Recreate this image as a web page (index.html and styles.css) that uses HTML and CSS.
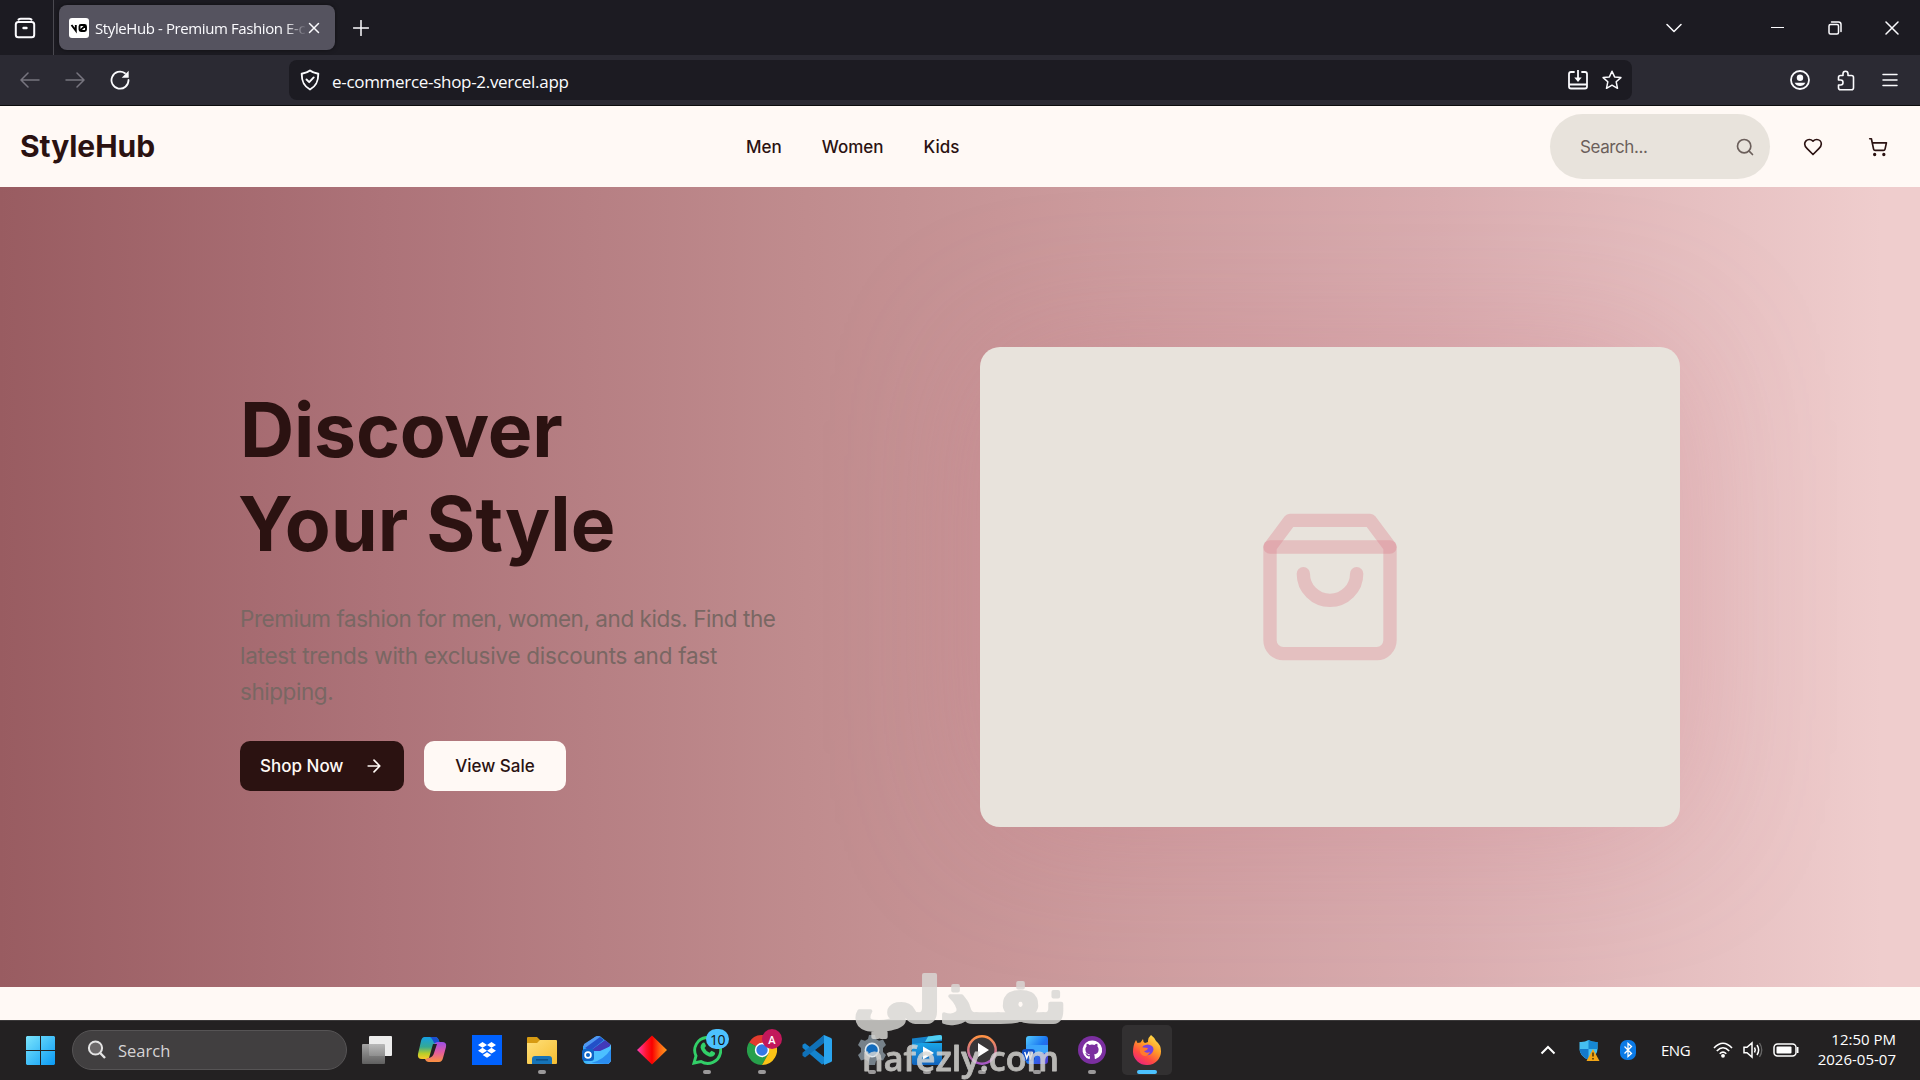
FILE: index.html
```html
<!DOCTYPE html>
<html lang="en">
<head>
    <meta charset="utf-8">
    <title>StyleHub - Premium Fashion E-commerce</title>
    <link rel="stylesheet" href="styles.css">
</head>
<body>
    <!-- Browser tabs -->
    <div class="tabbar">
        <div class="tab-manager">
            <svg width="22" height="22" viewBox="0 0 22 22" class="line thick"><path d="M4.500 2.600q1-.8 2.200-.8h8.600q1.200 0 2.200.8" /><rect x="1.800" y="5" width="18.400" height="15.200" rx="2.500"/><path d="M9.500 11h3" stroke-width="2.400"/></svg>
        </div>
        <div class="tab">
            <span class="favicon"><svg width="20" height="20" viewBox="0 0 20 20"><path d="M2.500 7l4.300 5.600V7M10.500 8.500q0-1.500 1.500-1.500h3.500q1.500 0 1.500 1.500v3q0 1.500-1.500 1.500H12q-1.500 0-1.500-1.500zM11 12.600L16.500 7.400" fill="none" stroke="#000" stroke-width="1.900"/></svg></span>
            <span class="tab-title">StyleHub - Premium Fashion E-c</span>
            <svg class="line tab-close" width="12" height="12" viewBox="0 0 12 12"><path d="M1.500 1.500l9 9M10.500 1.500l-9 9"/></svg>
        </div>
        <svg class="line new-tab" width="16" height="16" viewBox="0 0 16 16"><path d="M8 .5v15M.5 8h15"/></svg>
        <div class="window-controls">
            <svg class="line" width="16" height="10" viewBox="0 0 16 10"><path d="M1 1.500l7 7 7-7"/></svg>
            <svg class="line" width="13" height="14" viewBox="0 0 13 14"><path d="M0 6.500h13" stroke-width="1.200"/></svg>
            <svg class="line" width="14" height="14" viewBox="0 0 14 14"><rect x="1" y="3.500" width="9.500" height="9.500" rx="1.500"/><path d="M3.500 1h7q2.500 0 2.500 2.500v7"/></svg>
            <svg class="line" width="14" height="14" viewBox="0 0 14 14"><path d="M1 1l12 12M13 1L1 13"/></svg>
        </div>
    </div>

    <!-- Address bar -->
    <div class="toolbar">
        <div class="history">
            <svg class="line dim" width="20" height="20" viewBox="0 0 20 20"><path d="M1.500 10H19M8 3l-7 7 7 7"/></svg>
            <svg class="line dim" width="20" height="20" viewBox="0 0 20 20"><path d="M1 10h17.500M12 3l7 7-7 7"/></svg>
            <svg class="line" width="20" height="20" viewBox="0 0 20 20"><path d="M18.500 10A8.500 8.500 0 1 1 15 3.300" stroke-width="1.800"/><path d="M18.700.8v7h-7z" fill="#fbfbfe" stroke="none"/></svg>
        </div>
        <div class="urlbar">
            <svg class="line" width="20" height="22" viewBox="0 0 20 22"><path d="M10 1.500c2 1.700 5 2.700 8.300 3.300 0 7-1.500 12-8.300 15.700C3.200 16.800 1.700 11.800 1.700 4.800 5 4.200 8 3.200 10 1.500z" stroke-width="1.900"/><path d="M6.500 10.500l2.700 2.700 4.500-4.800" stroke-width="1.900"/></svg>
            <span class="url">e-commerce-shop-2.vercel.app</span>
            <svg class="line" width="20" height="20" viewBox="0 0 20 20"><path d="M6 2H3Q1 2 1 4v12.500q0 2 2 2h14q2 0 2-2V4q0-2-2-2h-3M1.500 14.500h17M10 0v9" stroke-width="1.800"/><path d="M6.300 7.500h7.400L10 12z" fill="#fbfbfe" stroke="none"/></svg>
            <svg class="line star" width="20" height="20" viewBox="0 0 20 20"><path d="M10 1.200l2.600 5.700 6.300.7-4.700 4.200 1.300 6.500L10 15.200l-5.500 3.100 1.300-6.500L1.100 7.600l6.300-.7z"/></svg>
        </div>
        <div class="toolbar-end">
            <svg class="line" width="20" height="20" viewBox="0 0 20 20"><circle cx="10" cy="10" r="9" stroke-width="1.800"/><circle cx="10" cy="7.800" r="3.200" fill="#fbfbfe" stroke="none"/><path d="M4.600 12.800h10.800Q13.500 16 10 16t-5.400-3.200z" fill="#fbfbfe" stroke="none"/></svg>
            <svg class="line" width="18" height="21" viewBox="0 0 18 21"><path d="M1.500 10V7.500q0-2 2-2H6V3.800q0-2.600 2.500-2.600T11 3.800v1.700h3.500q2 0 2 2V17.800q0 2-2 2h-11q-2 0-2-2V15h2.200q2.300 0 2.300-2.500T3.700 10z" stroke-width="1.600"/></svg>
            <svg class="line" width="16" height="14" viewBox="0 0 16 14"><path d="M1 1.500h14M1 7h14M1 12.500h14"/></svg>
        </div>
    </div>

    <header class="header">
        <div class="logo">StyleHub</div>
        <nav class="nav">
            <a>Men</a>
            <a>Women</a>
            <a>Kids</a>
        </nav>
        <div class="actions">
            <div class="search">
                <span>Search...</span>
                <svg width="20" height="20" viewBox="0 0 24 24" class="icon"><circle cx="11" cy="11" r="8"/><path d="m21 21-4.300-4.300"/></svg>
            </div>
            <svg width="20" height="20" viewBox="0 0 24 24" class="icon heart"><path d="M19 14c1.490-1.460 3-3.210 3-5.500A5.500 5.500 0 0 0 16.500 3c-1.760 0-3 .5-4.500 2-1.500-1.500-2.740-2-4.500-2A5.500 5.500 0 0 0 2 8.500c0 2.300 1.500 4.050 3 5.500l7 7Z"/></svg>
            <svg width="20" height="20" viewBox="0 0 24 24" class="icon cart"><circle cx="8" cy="21" r="1"/><circle cx="19" cy="21" r="1"/><path d="M2.050 2.050h2l2.660 12.420a2 2 0 0 0 2 1.580h9.780a2 2 0 0 0 1.950-1.570l1.650-7.430H5.120"/></svg>
        </div>
    </header>

    <section class="hero">
        <div class="hero-text">
            <h1>Discover<br><span>Your Style</span></h1>
            <p>Premium fashion for men, women, and kids. Find the<br><span>latest trends with exclusive discounts and fast</span><br>shipping.</p>
            <div class="buttons">
                <a class="button primary"><span>Shop Now</span><svg width="20" height="20" viewBox="0 0 24 24" class="icon"><path d="M5 12h14M12 5l7 7-7 7"/></svg></a>
                <a class="button secondary"><span>View Sale</span></a>
            </div>
        </div>
        <div class="hero-card">
            <svg width="160" height="160" viewBox="0 0 24 24" class="bag"><path d="M6 2 3 6v14a2 2 0 0 0 2 2h14a2 2 0 0 0 2-2V6l-3-4Z"/><path d="M3 6h18"/><path d="M16 10a4 4 0 0 1-8 0"/></svg>
        </div>
    </section>
    <div class="page-rest"></div>

    <!-- Taskbar -->
    <footer class="taskbar">
        <svg class="start" width="29" height="29" viewBox="0 0 29 29"><defs><linearGradient id="win" x2="1" y2="1"><stop stop-color="#7be5fc"/><stop offset="1" stop-color="#0a9af5"/></linearGradient></defs><path d="M1 0h13v14H0V1zM15 0h13l1 1v13H15zM0 15h14v14H1l-1-1zM15 15h14v13l-1 1H15z" fill="url(#win)"/></svg>
        <div class="task-search">
            <svg width="20" height="20" viewBox="0 0 20 20"><circle cx="8.500" cy="8" r="6.600" fill="#6b6869" stroke="#e4e4e4" stroke-width="2"/><path d="M13.200 13l4.800 5" stroke="#e4e4e4" stroke-width="2.400"/></svg>
            <span>Search</span>
        </div>
        <div class="apps">
            <div class="app"><svg width="30" height="30" viewBox="0 0 30 30"><defs><linearGradient id="tv" x2="0" y2="1"><stop stop-color="#b2b2b2"/><stop offset="1" stop-color="#666"/></linearGradient></defs><rect x="7" y="1" width="23" height="20" rx="1" fill="#ececec"/><rect y="9" width="23" height="20" rx="1" fill="url(#tv)" opacity=".9"/></svg></div>
            <div class="app"><svg width="30" height="30" viewBox="0 0 30 30"><defs><linearGradient id="cp1" x2="0" y2="1"><stop stop-color="#159fe4"/><stop offset=".45" stop-color="#35a993"/><stop offset=".75" stop-color="#b8ce29"/><stop offset="1" stop-color="#fbc92a"/></linearGradient><linearGradient id="cp2" x2="0" y2="1"><stop stop-color="#9a4fe8"/><stop offset=".5" stop-color="#e25ba1"/><stop offset="1" stop-color="#fb923f"/></linearGradient></defs><path d="M7.500 2H18q3 0 4 4l1 3q-5-1-6 2l-3 9q-1 4-5 4H5q-5 0-4-5L4 6q1-4 3.500-4z" fill="url(#cp1)"/><path d="M13 2h5q3 0 4 4l1 2h-6q-2-5-4-6z" fill="#1b4fd1"/><path d="M21 7h4q5 0 4 5l-3 11q-1 4-4 4H12q-3 0-4-3 4 0 5-3l4-11q1-3 4-3z" fill="url(#cp2)"/><path d="M16 9l-4 14q4-1 5-5l3-9z" fill="#232122"/></svg></div>
            <div class="app"><svg width="30" height="30" viewBox="0 0 30 30"><path d="M0 0h30v30H0z" fill="#0061fe"/><path d="M10.500 7l4.500 2.900-4.500 2.900L6 9.900zM19.500 7L24 9.900l-4.500 2.900L15 9.900zM10.500 12.800l4.500 2.900-4.500 2.900L6 15.700zM19.500 12.800l4.500 2.900-4.500 2.900-4.500-2.900zM15 17.200l4.300 2.800L15 22.800 10.700 20z" fill="#fff"/></svg></div>
            <div class="app open"><svg width="30" height="30" viewBox="0 0 30 30"><defs><linearGradient id="fo" x2="1" y2="1"><stop stop-color="#ffe07a"/><stop offset="1" stop-color="#f5bd31"/></linearGradient></defs><path d="M0 3q0-1 1-1h9l3 3v5H0z" fill="#d79b13"/><path d="M0 8h10l3-3h16q1 0 1 1v22q0 1-1 1H1q-1 0-1-1z" fill="url(#fo)"/><path d="M5 29v-5q0-3 3-3h14q3 0 3 3v5z" fill="#1673b7"/><path d="M9 24.800h12" stroke="#0b4f87" stroke-width="1.500"/></svg></div>
            <div class="app"><svg width="30" height="30" viewBox="0 0 30 30"><defs><linearGradient id="ol" x2="1" y2="1"><stop stop-color="#2f8df3"/><stop offset=".5" stop-color="#37bafa"/><stop offset="1" stop-color="#bda2ff"/></linearGradient></defs><path d="M1 11L13 2q3-2 6 0l10 8v14q0 5-5 5H6q-5 0-5-5z" fill="url(#ol)"/><path d="M2 9l11-7q3-2 6 0L4 13q-3-1-2-4z" fill="#4f97f2"/><path d="M3 13L18 2l4 3L8 16z" fill="#2350c8"/><path d="M8 16L23 5l5 4q1 2-1 3l-8 5z" fill="#4239b9"/><path d="M8 16h10l11-5v13q0 5-5 5H9z" fill="#4cc0ff"/><path d="M9 28q13-3 20-14v10q0 5-5 5z" fill="#2b8df0"/><rect y="14" width="12" height="12" rx="3" fill="#0f64c6"/><circle cx="6" cy="20" r="2.900" fill="none" stroke="#fff" stroke-width="1.700"/></svg></div>
            <div class="app"><svg width="30" height="30" viewBox="0 0 30 30"><defs><linearGradient id="di"><stop stop-color="#ff3db5"/><stop offset=".3" stop-color="#ff1632"/><stop offset=".5" stop-color="#f80000"/><stop offset=".75" stop-color="#ff5e12"/><stop offset="1" stop-color="#ff9a1c"/></linearGradient></defs><path d="M15 .5L30 15 15 29.500 0 15z" fill="url(#di)"/></svg></div>
            <div class="app open"><svg width="30" height="30" viewBox="0 0 30 30"><path d="M2 28l2-7A13 13 0 1 1 9 26.500z" fill="#232122" stroke="#32cf68" stroke-width="2.900"/><path d="M10 8.500q2-1.800 3 0l1 2.500-1.500 2q1.500 3.300 5 4.700l2-2 3 1.500q1.200.8.200 2.600-1.800 2.700-5.700 1.700Q9.800 18.500 8.500 12.500q0-2.700 1.500-4z" fill="#32cf68"/></svg><span class="badge count">10</span></div>
            <div class="app open"><svg width="30" height="30" viewBox="0 0 30 30"><path d="M15 15L2 7.500A15 15 0 0 1 28 7.500z" fill="#e33b2e"/><path d="M2 7.500A15 15 0 0 0 15 30l6.500-11.300z" fill="#27a04b"/><path d="M2 7.500L8.500 19l6.500-4z" fill="#27a04b"/><path d="M15 30A15 15 0 0 0 28 7.500H15l6.500 11z" fill="#fbc316"/><circle cx="15" cy="15" r="7.200" fill="#fff"/><circle cx="15" cy="15" r="5.700" fill="#3478e5"/></svg><span class="badge user">A</span></div>
            <div class="app"><svg width="30" height="30" viewBox="0 0 30 30"><path d="M22 0L8.500 12.600 3 8.300.5 9.800v3L20 29.500l2-1z" fill="#1484ce"/><path d="M22 8L3 22.500.5 20.800v-3L22 0z" fill="#1071b8"/><path d="M22 0l7 3q1 .5 1 1.500v21q0 1-1 1.500l-7 3z" fill="#2aa5ef"/><path d="M22 8v14l-9-7z" fill="#232122"/></svg></div>
            <div class="app open"><svg width="30" height="30" viewBox="0 0 30 30"><path d="M12 0h6l1 4 3 1.700 4-1.200 3 5.500-3 3v4l3 3-3 5.500-4-1.200L19 26l-1 4h-6l-1-4-3-1.700-4 1.200L1 20l3-3v-4l-3-3 3-5.500 4 1.200L11 4z" fill="#76818a"/><circle cx="15" cy="15" r="6.600" fill="#126bbd" stroke="#dfe9f0" stroke-width="1.600"/></svg></div>
            <div class="app open"><svg width="30" height="30" viewBox="0 0 30 30"><defs><linearGradient id="mv" x2="0" y2="1"><stop stop-color="#1aa5e8"/><stop offset="1" stop-color="#1262bb"/></linearGradient></defs><path d="M0 8h30v20q0 2-2 2H2q-2 0-2-2z" fill="url(#mv)"/><path d="M0 3.500L28 0q2 0 2 2v4L0 9z" fill="#1682ca"/><path d="M16 1.600L28 0q2 0 2 2v2.500L13 7z" fill="#51cff2"/><path d="M11 11.500v13L22 18z" fill="#fff"/></svg></div>
            <div class="app open"><svg width="30" height="30" viewBox="0 0 30 30"><defs><linearGradient id="mp" x2="0" y2="1"><stop stop-color="#ff9244"/><stop offset="1" stop-color="#a557c5"/></linearGradient></defs><circle cx="15" cy="15" r="13.700" fill="#383638" stroke="url(#mp)" stroke-width="2.500"/><path d="M11 8v14l11-7z" fill="#fff"/></svg></div>
            <div class="app open"><svg width="30" height="30" viewBox="0 0 30 30"><defs><linearGradient id="wo" x2="1" y2="1"><stop stop-color="#53cbff"/><stop offset=".5" stop-color="#1b76f1"/><stop offset="1" stop-color="#5637d2"/></linearGradient></defs><rect x="4" y="1" width="22" height="28" rx="3" fill="url(#wo)"/><path d="M4 10h22v8H4z" fill="#3ba5fb"/><rect y="14" width="13" height="12" rx="3" fill="#1450c7"/><path d="M2.700 17l2 6 1.900-5 1.900 5 2-6" fill="none" stroke="#fff" stroke-width="1.500"/></svg></div>
            <div class="app open"><svg width="30" height="30" viewBox="0 0 30 30"><circle cx="15" cy="15" r="14" fill="#7b2fa0"/><path d="M15 5.500A9.500 9.500 0 0 0 12 24c.7.100.9-.3.900-.7v-2c-3 .5-3.300-1-3.700-1.700-.3-.7-.8-.8-.8-1.200 1.600-.5 2 1.300 3 1.700.7.200 1.400 0 1.600-.7-3-.6-4.600-2-4.600-5 0-1.300.5-2.200 1.200-3-.3-1-.2-1.900.2-2.700 1 0 1.900.5 2.700 1.200q2.500-.7 5 0c.8-.7 1.700-1.200 2.700-1.200.4.800.5 1.700.2 2.700.7.800 1.200 1.700 1.200 3 0 3-1.600 4.400-4.600 5 .5.500.7 1.200.7 2v1.900c0 .4.200.8.900.7A9.500 9.500 0 0 0 15 5.500z" fill="#fff"/></svg></div>
            <div class="app open active"><svg width="30" height="30" viewBox="0 0 30 30"><defs><linearGradient id="ff" x1=".8" x2=".2" y2="1"><stop stop-color="#ffe14a"/><stop offset=".4" stop-color="#ff9a27"/><stop offset=".7" stop-color="#ff4a42"/><stop offset="1" stop-color="#e91f86"/></linearGradient></defs><path d="M19 0q4 3 5 6 5 4 5 10a14 13.500 0 0 1-28 1Q1 10 4 5l1.500 3 3-.5L11 4q0 3 2 4l3-1q-.5-4 3-7z" fill="url(#ff)"/><path d="M11 11q5-3 9 0 3 3 0 7-3 3.500-7 1.500-4-2-3-6z" fill="#7643df"/><path d="M8 12l8 1q-1 3-4 3 2 3 6 1-3 6-8 3-3-3-2-8z" fill="#ff7a2d"/></svg></div>
        </div>
        <div class="tray">
            <svg class="tray-up" width="16" height="10" viewBox="0 0 16 10"><path d="M1.500 8.500L8 2l6.500 6.500" fill="none" stroke="#fff" stroke-width="2"/></svg>
            <svg class="tray-shield" width="21" height="21" viewBox="0 0 21 21"><path d="M9.500 0q4 2.500 9 2v7q0 7-9 11Q.5 16 .5 9V2q5 .5 9-2z" fill="#45bff1"/><path d="M9.500 0q4 2.500 9 2v7H9.500z" fill="#1688d4"/><path d="M.5 9h9v11Q1 16 .5 9z" fill="#1379cb"/><path d="M14 9l6.500 12h-13z" fill="#f2a516"/><path d="M14 12.500v4M14 18v1.500" stroke="#3b2904" stroke-width="1.400"/></svg>
            <svg class="tray-bt" width="16" height="20" viewBox="0 0 16 20"><rect width="16" height="20" rx="7" fill="#0b7ae6"/><path d="M4.500 6.500l7 7L8 16.500v-13l3.500 3-7 7" fill="none" stroke="#fff" stroke-width="1.300"/></svg>
            <span class="lang">ENG</span>
            <svg class="tray-wifi" width="20" height="16" viewBox="0 0 20 16"><path d="M1 6Q10-3.500 19 6M3.800 9Q10 2.500 16.200 9M6.700 11.700Q10 8.500 13.300 11.700" fill="none" stroke="#fff" stroke-width="1.600"/><circle cx="10" cy="13.800" r="1.900" fill="#fff"/></svg>
            <svg class="tray-sound" width="20" height="18" viewBox="0 0 20 18"><path d="M1 6.300h3L9 2v14l-5-4.300H1zM11.500 6.500q1.500 2.500 0 5M14 4q3.300 5 0 10" fill="none" stroke="#fff" stroke-width="1.500"/><path d="M16.500 2q4.500 7 0 14" fill="none" stroke="#666" stroke-width="1.300"/></svg>
            <svg class="tray-battery" width="26" height="14" viewBox="0 0 26 14"><rect x="1" y="1" width="22" height="12" rx="3.500" fill="none" stroke="#fff" stroke-width="1.500"/><rect x="3.500" y="3.500" width="15" height="7" rx="1" fill="#fff"/><path d="M24.700 4v6" stroke="#fff" stroke-width="1.600"/></svg>
            <div class="clock"><span>12:50 PM</span><span>2026-05-07</span></div>
        </div>
    </footer>

    <svg class="watermark" width="240" height="120" viewBox="0 0 240 120">
        <text class="mark-ar" x="120" y="62" text-anchor="middle" direction="rtl" textLength="213" lengthAdjust="spacingAndGlyphs">نفـذلي</text>
        <text class="mark-en" x="22" y="111" textLength="197" lengthAdjust="spacingAndGlyphs">nafezly.com</text>
    </svg>
</body>
</html>
```
FILE: styles.css
```css
* {
    box-sizing: border-box;
}

body {
    margin: 0;
    width: 1920px;
    height: 1080px;
    overflow: hidden;
    position: relative;
    display: flex;
    flex-direction: column;
    font-family: Inter, "Liberation Sans", sans-serif;
    background: #fff9f5;
    color: #2b1211;
}

svg {
    display: block;
    flex: none;
}

.line {
    fill: none;
    stroke: #fbfbfe;
    stroke-width: 1.5;
    stroke-linecap: round;
    stroke-linejoin: round;
}

.line.dim {
    stroke: #77757f;
}

.line.thick {
    stroke-width: 2;
}

.icon {
    fill: none;
    stroke: currentColor;
    stroke-width: 2;
    stroke-linecap: round;
    stroke-linejoin: round;
}

/* browser */
.tabbar {
    height: 55px;
    flex: none;
    display: flex;
    align-items: center;
    background: #1c1b22;
    font-family: "Open Sans", "Noto Sans", sans-serif;
}

.tab-manager {
    width: 54px;
    height: 55px;
    padding: 17px 0 0 14px;
    border-right: 1px solid #4a4950;
}

.tab {
    width: 276px;
    height: 45px;
    margin-left: 5px;
    padding: 0 15px 0 10px;
    border-radius: 8px;
    background: #55535f;
    display: flex;
    align-items: center;
    box-shadow: 0 0 4px rgba(0, 0, 0, 0.5);
}

.favicon {
    width: 20px;
    height: 20px;
    border-radius: 3px;
    background: #fff;
}

.tab-title {
    flex: 1;
    min-width: 0;
    margin: 0 2px 0 6px;
    white-space: nowrap;
    font-size: 15px;
    letter-spacing: -0.4px;
    color: #fbfbfe;
    -webkit-mask-image: linear-gradient(to right, #000 190px, transparent 212px);
    mask-image: linear-gradient(to right, #000 190px, transparent 212px);
}

.new-tab {
    margin-left: 18px;
}

.window-controls {
    margin-left: auto;
    padding-right: 21px;
    display: flex;
    align-items: center;
}

.window-controls svg:nth-child(1) { margin-right: 89px; }
.window-controls svg:nth-child(2) { margin-right: 44px; }
.window-controls svg:nth-child(3) { margin-right: 43px; }

.toolbar {
    height: 51px;
    flex: none;
    display: flex;
    align-items: center;
    background: #2b2a33;
    border-bottom: 1px solid #0c0c0d;
}

.history {
    width: 289px;
    padding-left: 20px;
    display: flex;
    gap: 25px;
}

.urlbar {
    width: 1343px;
    height: 40px;
    padding: 0 10px 0 11px;
    border-radius: 8px;
    background: #1c1b22;
    display: flex;
    align-items: center;
}

.url {
    flex: 1;
    margin-left: 12px;
    padding-top: 2px;
    font-family: "Open Sans", "Noto Sans", sans-serif;
    font-size: 17px;
    letter-spacing: -0.3px;
    color: #fbfbfe;
}

.star {
    margin-left: 14px;
}

.toolbar-end {
    margin-left: auto;
    padding-right: 22px;
    display: flex;
    align-items: center;
    gap: 27px;
}

/* site header */
.header {
    height: 81px;
    flex: none;
    padding: 0 20px;
    display: flex;
    align-items: center;
    background: #fff9f5;
}

.logo {
    width: 726px;
    padding-bottom: 2px;
    font-size: 30px;
    font-weight: 700;
    letter-spacing: -0.05px;
}

.nav {
    display: flex;
    gap: 40px;
    font-size: 17px;
    font-weight: 500;
}

.actions {
    margin-left: auto;
    display: flex;
    align-items: center;
}

.search {
    width: 220px;
    height: 65px;
    padding: 0 15px 0 30px;
    border-radius: 33px;
    background: #e8e3dc;
    display: flex;
    align-items: center;
    justify-content: space-between;
    font-size: 17px;
    letter-spacing: -0.4px;
    color: #6b5f5b;
}

.heart {
    margin-left: 33px;
}

.cart {
    margin: 0 12px 0 45px;
}

/* hero */
.hero {
    height: 800px;
    flex: none;
    padding: 0 240px;
    display: flex;
    align-items: center;
    justify-content: space-between;
    background: linear-gradient(to right, #995c61 0%, #ad7379 20%, #c08c8e 42%, #cc9b9d 57%, #d9adb0 75%, #efcdcd 98%);
}

h1 {
    margin: 0;
    font-size: 75px;
    line-height: 94px;
    font-weight: 700;
    letter-spacing: -0.2px;
}

h1 span {
    margin-left: -2px;
    letter-spacing: 0.15px;
}

.hero-text p {
    margin: 30px 0;
    font-size: 22.5px;
    line-height: 36.5px;
    letter-spacing: -0.45px;
    white-space: nowrap;
    color: #796763;
}

.hero-text p span {
    letter-spacing: -0.25px;
}

.buttons {
    display: flex;
    gap: 20px;
}

.button {
    height: 50px;
    border-radius: 10px;
    display: flex;
    align-items: center;
    font-size: 17px;
    font-weight: 500;
}

.primary {
    width: 164px;
    padding: 0 20px;
    justify-content: space-between;
    background: #2b1211;
    color: #fff9f5;
}

.secondary {
    width: 142px;
    justify-content: center;
    background: #fff9f5;
}

.hero-card {
    width: 700px;
    height: 480px;
    border-radius: 20px;
    background: #e8e3dc;
    display: flex;
    align-items: center;
    justify-content: center;
    box-shadow: 0 0 150px rgba(200, 115, 130, 0.27);
}

.bag {
    fill: none;
    stroke: rgba(222, 125, 140, 0.35);
    stroke-width: 2;
    stroke-linecap: round;
    stroke-linejoin: round;
}

.page-rest {
    height: 33px;
    flex: none;
}

/* taskbar */
.taskbar {
    height: 60px;
    flex: none;
    display: flex;
    align-items: center;
    padding-bottom: 1px;
    background: #232122;
    border-top: 1px solid #3a3839;
    font-family: "Open Sans", "Noto Sans", sans-serif;
    color: #fff;
}

.start {
    margin-left: 26px;
}

.task-search {
    width: 275px;
    height: 40px;
    margin-left: 17px;
    padding-left: 14px;
    border: 1px solid #565455;
    border-radius: 20px;
    background: #413f40;
    display: flex;
    align-items: center;
    gap: 11px;
    font-size: 16.5px;
    color: #d6d4d5;
}

.apps {
    margin-left: 5px;
    display: flex;
    gap: 5px;
}

.app {
    width: 50px;
    height: 50px;
    position: relative;
    display: flex;
    align-items: center;
    justify-content: center;
    border-radius: 5px;
}

.app.open::after {
    content: "";
    position: absolute;
    left: 21px;
    bottom: 1px;
    width: 8px;
    height: 4px;
    border-radius: 2px;
    background: #9b999a;
}

.app.active {
    background: #323031;
}

.app.active::after {
    left: 15px;
    width: 20px;
    background: #4cc2ff;
}

.badge {
    position: absolute;
    display: flex;
    align-items: center;
    justify-content: center;
}

.count {
    left: 24px;
    top: 4px;
    width: 23px;
    height: 20px;
    border-radius: 10px;
    background: #4cc2ff;
    color: #111;
    font-size: 14px;
    letter-spacing: -0.5px;
}

.user {
    left: 25px;
    top: 4px;
    width: 20px;
    height: 20px;
    border-radius: 50%;
    background: #c2185b;
    font-size: 11px;
    font-weight: 600;
}

.tray {
    margin-left: auto;
    padding-right: 24px;
    display: flex;
    align-items: center;
    font-size: 15px;
}

.tray-up { margin-right: 23px; }
.tray-shield { margin-right: 20px; }
.tray-bt { margin-right: 25px; }
.tray-wifi { margin-right: 10px; }
.tray-sound { margin-right: 10px; }

.lang {
    width: 52px;
    padding-bottom: 1px;
    letter-spacing: -0.5px;
}

.clock {
    width: 97px;
    padding-bottom: 3px;
    display: flex;
    flex-direction: column;
    align-items: flex-end;
    line-height: 20px;
    white-space: nowrap;
}

.watermark {
    position: absolute;
    left: 840px;
    top: 960px;
    fill: #d9d8d5;
    stroke: #d9d8d5;
    stroke-linejoin: round;
    opacity: 0.82;
}

.mark-ar {
    font-family: "DejaVu Sans", sans-serif;
    font-size: 62px;
    font-weight: 700;
    stroke-width: 4px;
}

.mark-en {
    font-family: "Open Sans", sans-serif;
    font-size: 34px;
    font-weight: 600;
    stroke-width: 0.8px;
}
```
